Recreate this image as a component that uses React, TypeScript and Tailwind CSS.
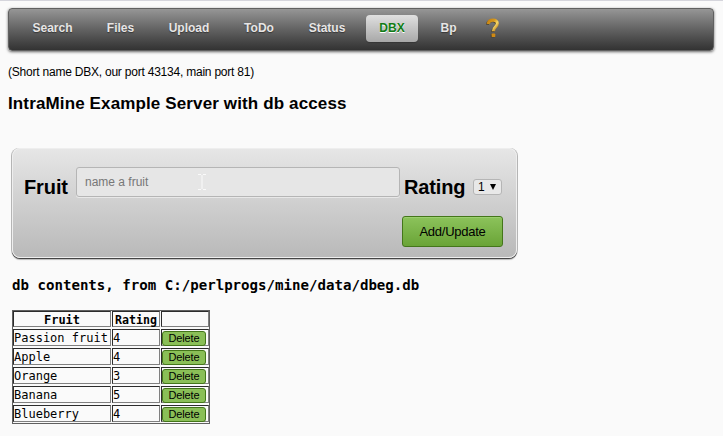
const tabs: [string, string][] = [
  ["Search", "ml-[16px] w-[54px]"],
  ["Files", "ml-[20px] w-[42px]"],
  ["Upload", "ml-[20px] w-[55px]"],
  ["ToDo", "ml-[20px] w-[45px]"],
  ["Status", "ml-[20px] w-[51px]"],
  ["DBX", "ml-[14px] w-[52px]"],
  ["Bp", "ml-[14px] w-[32px]"],
];
const rows: [string, number][] = [
  ["Passion fruit", 4],
  ["Apple", 4],
  ["Orange", 3],
  ["Banana", 5],
  ["Blueberry", 4],
];
const cell = "border border-t-[#2c2c2c] border-l-[#2c2c2c] border-r-[#808080] border-b-[#808080] flex";
const headCell = "h-[16px] items-center justify-center pt-[2px] font-bold";

function Nav() {
  return (
    <nav className="mt-[8px] ml-[8px] flex h-[43px] w-[706px] items-start rounded-[4px] border border-[#606060] bg-linear-to-b from-[#969696] to-[#333] pt-[6px] shadow-[0_1px_3px_rgba(0,0,0,0.6)]">
      {tabs.map(([name, size]) => (
        <a
          key={name}
          className={`${size} flex h-[27px] shrink-0 items-center justify-center rounded-[4px] pb-[2px] text-[12px] font-bold ${
            name === "DBX"
              ? "bg-linear-to-b from-[#e0e0e0] to-[#a8a8a8] text-[#117c15] [text-shadow:0_1px_0_#fff] shadow-[0_1px_1px_rgba(0,0,0,0.2)]"
              : "pl-px text-[#e7e5e5] [text-shadow:0_1px_1px_rgba(0,0,0,0.4)]"
          }`}
        >
          {name}
        </a>
      ))}
      <svg className="mt-[3px] ml-[22px] h-[20px] w-[14px]" viewBox="0 0 15 22">
        <defs>
          <linearGradient id="gold" x1="0" y1="0" x2="1" y2="1">
            <stop offset="0" stopColor="#c58112" />
            <stop offset=".35" stopColor="#d89a1d" />
            <stop offset=".6" stopColor="#f6d868" />
            <stop offset="1" stopColor="#ad6708" />
          </linearGradient>
        </defs>
        <path d="M2 6.5C3 1 12.5 1 12.3 6C12 10 8 9.5 8 14.5" transform="translate(-.7 .8)" fill="none" stroke="#49402f" strokeWidth="3.4" />
        <path d="M2 6.5C3 1 12.5 1 12.3 6C12 10 8 9.5 8 14.5" fill="none" stroke="url(#gold)" strokeWidth="3.4" />
        <rect x="5" y="17.5" width="4.5" height="4" rx="1" fill="#49402f" />
        <rect x="6" y="17" width="4" height="4" rx="1" fill="#cf8913" />
      </svg>
    </nav>
  );
}

export default function App() {
  return (
    <div className="h-[436px] w-[723px] overflow-hidden border-t border-[#d5d5dc] bg-[#fafafa] font-['Liberation_Sans',Arial,sans-serif] text-black">
      <div className="flex flex-col">
        <div className="-mt-px flow-root">
          <Nav />
        </div>
        <p className="mt-[14px] ml-[8px] h-[14px] text-[12px] leading-[14px] tracking-[-0.22px] whitespace-nowrap">
          (Short name DBX, our port 43134, main port 81)
        </p>
        <h2 className="mt-[15px] ml-[8px] h-[19px] text-[17px] leading-[19px] font-bold tracking-[0.13px] whitespace-nowrap">
          IntraMine Example Server with db access
        </h2>
        <form className="mt-[35px] ml-[12px] h-[110px] w-[505px] rounded-[8px] border border-[#eee] bg-linear-to-b from-[#e6e6e6] to-[#b9b9b9] pt-[18px] shadow-[0_1px_0_#444,-1px_0_0_#b5b5b5,1px_0_0_#b5b5b5,0_2px_1px_#bbb]">
          <div className="flex h-[30px] items-start">
            <label className="ml-[11px] w-[52px] text-[20px] leading-[40px] font-bold tracking-[-0.1px]">Fruit</label>
            <div className="flex h-[30px] w-[324px] items-center rounded-[3px] border border-[#b5b5b5] bg-[#e6e6e6] pl-[8px] shadow-[0_1px_0_#e8e8e8]">
              <span className="text-[12px] text-[#777]">name a fruit</span>
              <svg className="ml-[50px] -mt-px h-[16px] w-[8px]" viewBox="0 0 8 16">
                <path d="M0 .5H3M5 .5H8M4 1V15M0 15.5H3M5 15.5H8" stroke="#fafafa" fill="none" />
              </svg>
            </div>
            <label className="ml-[4px] w-[69px] text-[20px] leading-[40px] font-bold tracking-[-0.15px]">Rating</label>
            <div className="mt-[12px] flex h-[16px] w-[29px] items-center rounded-[3px] border border-[#b5b5b5] bg-[#e8e8e8] pl-[4px]">
              <span className="text-[12px] leading-[14px]">1</span>
              <svg className="ml-[5px] h-[6px] w-[6px]" viewBox="0 0 6 6">
                <path d="M0 0H6L3 6Z" />
              </svg>
            </div>
          </div>
          <button type="button" className="mt-[19px] ml-[389px] flex h-[31px] w-[101px] items-center justify-center rounded-[3px] border border-[#44761a] bg-linear-to-b from-[#8cc35b] to-[#6aa436] text-[13px] tracking-[-0.25px] shadow-[inset_0_1px_0_#9bcf6e]">
            Add/Update
          </button>
        </form>
        <h3 className="mt-[17px] ml-[12px] h-[20px] font-['DejaVu_Sans_Mono',monospace] text-[14.1px] leading-[20px] font-bold whitespace-nowrap">
          db contents, from C:/perlprogs/mine/data/dbeg.db
        </h3>
        <div className="mt-[15px] ml-[12px] grid h-[114px] w-[198px] grid-cols-[98px_48px_48px] content-start gap-x-px gap-y-[2px] border border-[#606060] font-['DejaVu_Sans_Mono',monospace] text-[12px] leading-[14px]">
          <div className={`${cell} ${headCell}`}>Fruit</div>
          <div className={`${cell} ${headCell} text-[11.6px]`}>Rating</div>
          <div className={cell} />
          {rows.map(([fruit, rating]) => (
            <div key={fruit} className="contents">
              <div className={`${cell} h-[17px] items-center whitespace-nowrap`}>{fruit}</div>
              <div className={`${cell} h-[17px] items-center`}>{rating}</div>
              <div className={`${cell} h-[17px] items-start pt-px`}>
                <button type="button" className="flex h-[15px] w-[44px] shrink-0 items-center justify-center rounded-[3px] border border-[#44761a] bg-[#8abf57] font-['Liberation_Sans',Arial,sans-serif] text-[11px] leading-[13px] tracking-[-0.1px]">
                  Delete
                </button>
              </div>
            </div>
          ))}
        </div>
      </div>
    </div>
  );
}
